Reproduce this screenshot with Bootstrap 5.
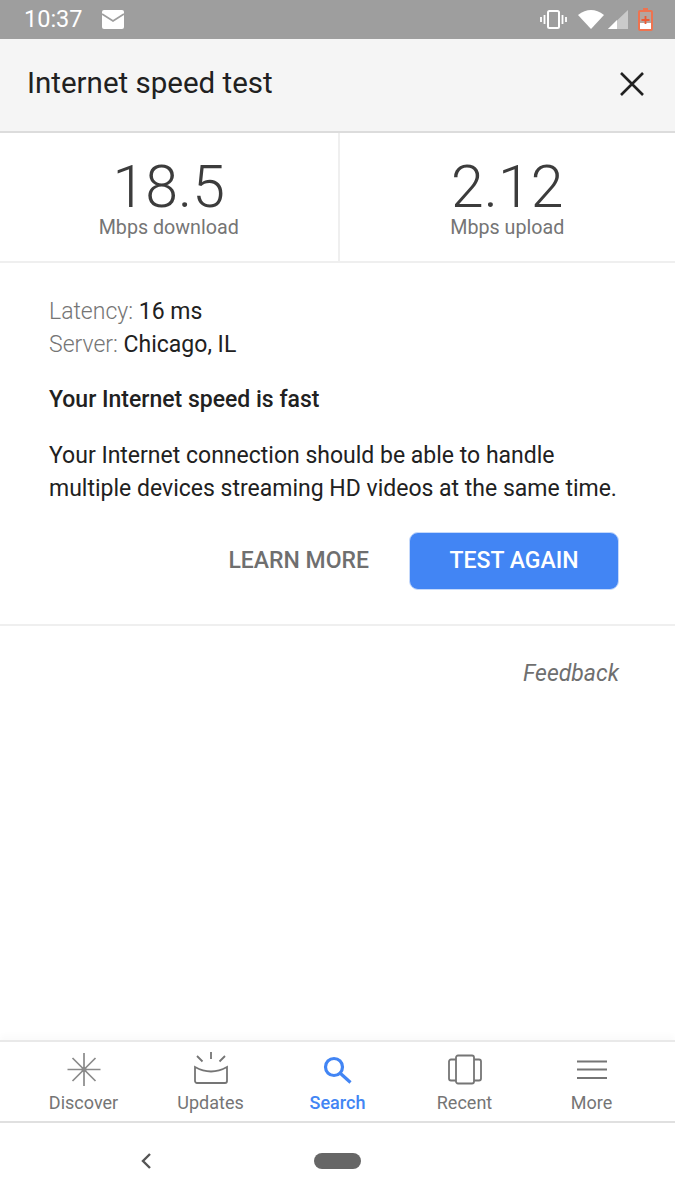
<!DOCTYPE html>
<html lang="en">
<head>
<meta charset="UTF-8">
<title>Internet speed test</title>
<link href="https://cdn.jsdelivr.net/npm/bootstrap@5.3.0/dist/css/bootstrap.min.css" rel="stylesheet">
<style>
body { font-family: Roboto, "Liberation Sans", sans-serif; background: #fff; color: #212121; width: 675px; height: 1200px; overflow: hidden; }
.phone { height: 1200px; }
.status-bar { height: 39px; background: #9e9e9e; color: #fff; padding: 0 22px 0 24px; font-size: 23.5px; }
.status-bar svg { display: block; }
.mail-icon { margin-left: 19px; }
.status-icons { gap: 10.5px; }
.dialog-head { height: 94px; background: #f5f5f5; border-bottom: 2px solid #dcdcdc; padding: 0 30px 2px 27px; }
.dialog-head h1 { font-size: 29.5px; font-weight: 400; margin: 0; color: #212121; }
.stats { height: 130px; border-bottom: 2px solid #efefef; }
.stat-cell { width: 50%; height: 128px; padding-top: 27px; text-align: center; }
.stat-cell + .stat-cell { border-left: 2px solid #efefef; }
.stat-num { font-size: 59px; font-weight: 300; line-height: 54px; color: #3c3c3c; }
.stat-label { font-size: 19.7px; line-height: 24px; color: #757575; margin-top: 2px; }
.result { height: 363px; border-bottom: 2px solid #efefef; padding: 32px 56px 0 49px; font-size: 23px; line-height: 33px; color: #212121; }
.result .muted { color: #757575; font-weight: 300; }
.result p { margin: 0; }
.verdict { font-weight: 500; margin-top: 22px !important; }
.explain { margin-top: 23px !important; }
.actions { margin-top: 27px; }
.learn-btn { font-size: 23px; font-weight: 500; color: #6f6f6f; padding: 0; border: 0; margin-right: 40px; }
.again-btn { width: 210px; height: 58px; background: #4285f4; border: 1px solid #c5d9fb; border-radius: 9px; color: #fff; font-size: 23px; font-weight: 500; padding: 0; }
.again-btn:hover { background: #4285f4; color: #fff; }
.feedback-row { height: 414px; padding: 31px 56px 0 0; text-align: right; font-size: 23px; font-style: italic; color: #6f6f6f; }
.tabbar { height: 83px; border-top: 2px solid #e9e9e9; border-bottom: 2px solid #e0e0e0; padding: 10px 20px 0; box-shadow: 0 -5px 6px rgba(0, 0, 0, .02); }
.tab { width: 127px; text-align: center; font-size: 18px; line-height: 22px; color: #757575; }
.tab svg { display: block; margin: 0 auto 6px; }
.tab.active { color: #4285f4; font-weight: 500; }
.nav-keys { height: 77px; padding-bottom: 1px; }
.pill { width: 47px; height: 16px; border-radius: 8px; background: #666; }
.back-key { margin-left: 139px; margin-right: 161px; }
</style>
</head>
<body>
<div class="phone d-flex flex-column">
  <div class="status-bar d-flex align-items-center">
    <span>10:37</span>
    <svg class="mail-icon" width="22" height="19" viewBox="0 0 22 19"><path fill="#fff" d="M2 0h18a2 2 0 0 1 2 2v15a2 2 0 0 1-2 2H2a2 2 0 0 1-2-2V2a2 2 0 0 1 2-2z"/><path fill="none" stroke="#9e9e9e" stroke-width="1.800" d="M0 4l11 7 11-7"/></svg>
    <div class="status-icons ms-auto d-flex align-items-center">
      <svg width="27" height="19" viewBox="0 0 27 19" fill="none" stroke="#fff" stroke-width="2"><rect x="8" y="1" width="11" height="17" rx="1.500"/><path d="M4.500 5v9M1 7v5M22.500 5v9M26 7v5" stroke-width="1.800"/></svg>
      <svg width="50" height="21" viewBox="0 0 50 21"><path fill="#fff" d="M0 6Q13-4 26 6L13 20z"/><path fill="#fff" fill-opacity=".45" d="M50 1v19H30z"/><path fill="#fff" d="M39 11v9h-9z"/></svg>
      <svg width="15" height="23" viewBox="0 0 15 23"><path fill="#ee7350" d="M5 0h5v2h3a2 2 0 0 1 2 2v17a2 2 0 0 1-2 2H2a2 2 0 0 1-2-2V4a2 2 0 0 1 2-2h3z"/><rect x="2" y="4" width="11" height="11" fill="#b5a59f"/><rect x="2" y="15" width="11" height="6" fill="#fff"/><path fill="none" stroke="#ee5a33" stroke-width="1.800" d="M3.500 12h8M7.500 8v8"/></svg>
    </div>
  </div>
  <div class="dialog-head d-flex align-items-center justify-content-between">
    <h1>Internet speed test</h1>
    <svg width="26" height="26" viewBox="0 0 26 26" fill="none" stroke="#212121" stroke-width="2.600"><path d="M2 2l22 22M24 2L2 24"/></svg>
  </div>
  <div class="stats d-flex">
    <div class="stat-cell"><div class="stat-num">18.5</div><div class="stat-label">Mbps download</div></div>
    <div class="stat-cell"><div class="stat-num">2.12</div><div class="stat-label">Mbps upload</div></div>
  </div>
  <div class="result">
    <p><span class="muted">Latency:</span> 16 ms</p>
    <p><span class="muted">Server:</span> Chicago, IL</p>
    <p class="verdict">Your Internet speed is fast</p>
    <p class="explain">Your Internet connection should be able to handle multiple devices streaming HD videos at the same time.</p>
    <div class="actions d-flex justify-content-end align-items-center">
      <button type="button" class="btn learn-btn">LEARN MORE</button>
      <button type="button" class="btn again-btn">TEST AGAIN</button>
    </div>
  </div>
  <div class="feedback-row">Feedback</div>
  <div class="tabbar d-flex">
    <div class="tab">
      <svg width="34" height="34" viewBox="0 0 34 34" fill="none" stroke="#8a8a8a" stroke-width="1.700"><path d="M17 1v33M.5 17.500h33M5.500 6l23 23M28.500 6l-23 23"/><circle cx="17" cy="17.500" r="2.500" fill="#8a8a8a" stroke="none"/></svg>
      Discover
    </div>
    <div class="tab">
      <svg width="34" height="34" viewBox="0 0 34 34" fill="none" stroke="#757575" stroke-width="1.800"><path d="M1 15q16 9 32 0v14a2 2 0 0 1-2 2H3a2 2 0 0 1-2-2z"/><path d="M17 0v7M3 4l5.500 5.500M31 4l-5.500 5.500"/></svg>
      Updates
    </div>
    <div class="tab active">
      <svg width="34" height="34" viewBox="0 0 34 34" fill="none" stroke="#4285f4" stroke-width="3.200"><circle cx="13" cy="15" r="8.500"/><path d="M19 21l10.500 9.500"/></svg>
      Search
    </div>
    <div class="tab">
      <svg width="34" height="34" viewBox="0 0 34 34" fill="none" stroke="#757575" stroke-width="1.800"><rect x="8" y="3.500" width="18" height="28" rx="2"/><path d="M8 7.500H3a2 2 0 0 0-2 2v17a2 2 0 0 0 2 2h5M26 7.500h5a2 2 0 0 1 2 2v17a2 2 0 0 1-2 2h-5"/></svg>
      Recent
    </div>
    <div class="tab">
      <svg width="34" height="34" viewBox="0 0 34 34" fill="none" stroke="#757575" stroke-width="1.800"><path d="M2 9.500h30M2 17.500h30M2 26h30"/></svg>
      More
    </div>
  </div>
  <div class="nav-keys d-flex align-items-center">
    <svg class="back-key" width="14" height="18" viewBox="0 0 14 18" fill="none" stroke="#555" stroke-width="2.400"><path d="M11 2L4 9l7 7"/></svg>
    <div class="pill"></div>
  </div>
</div>
<script src="https://cdn.jsdelivr.net/npm/bootstrap@5.3.0/dist/js/bootstrap.bundle.min.js"></script>
</body>
</html>
